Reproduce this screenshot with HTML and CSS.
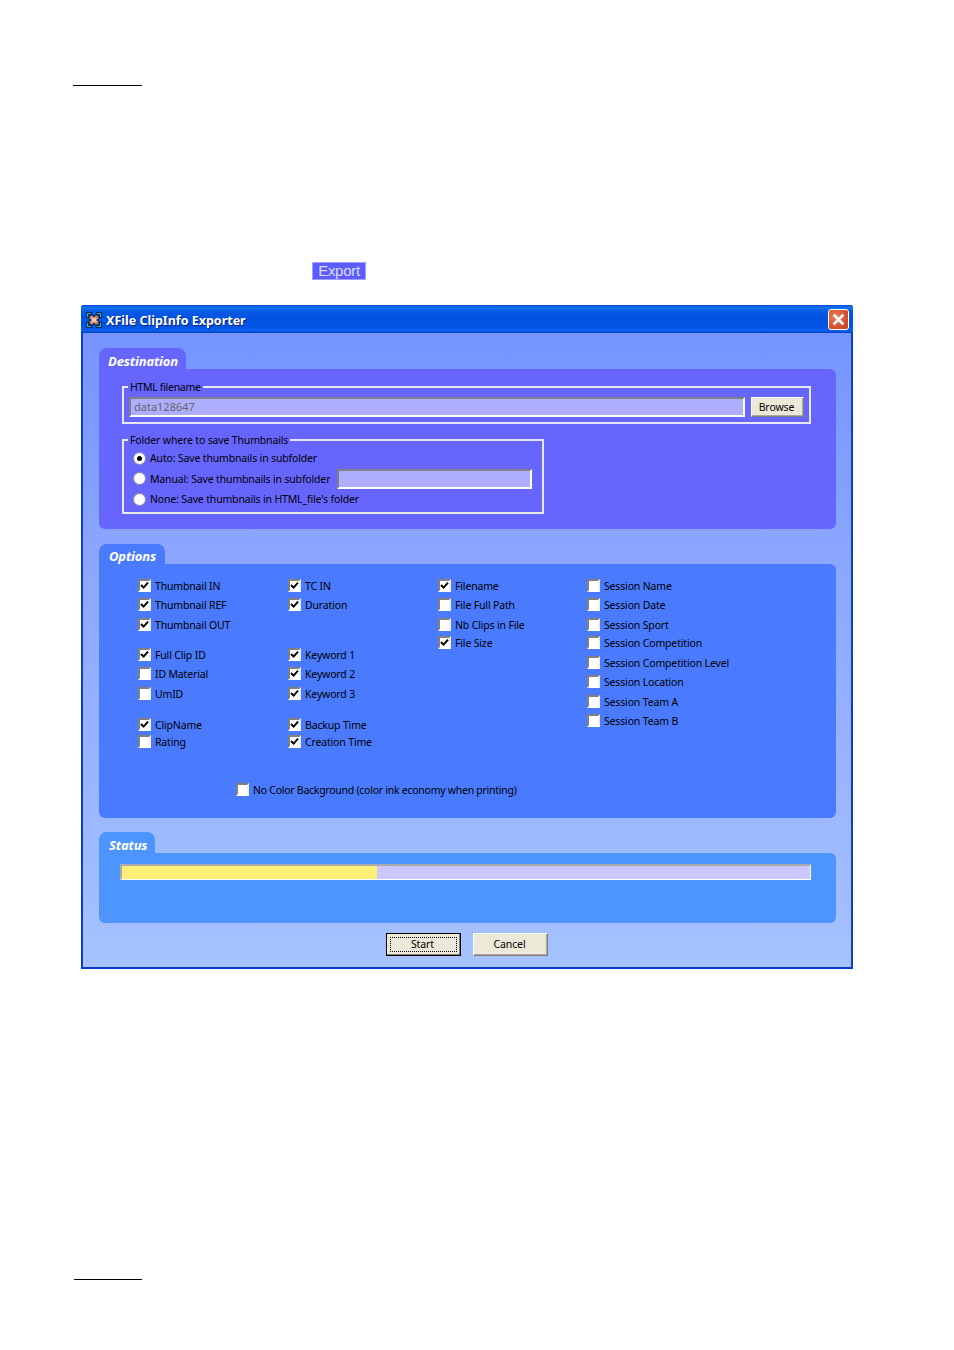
FILE: index.html
```html
<!DOCTYPE html>
<html lang="en">
<head>
<meta charset="utf-8">
<title>XFile ClipInfo Exporter</title>
<link rel="stylesheet" href="styles.css">
</head>
<body>
<div class="page">
  <div class="rule rule-top"></div>
  <div class="export-line"><span class="export">Export</span></div>
  <section class="window">
    <header class="titlebar">
      <svg class="app-icon" viewBox="0 0 16 16" aria-hidden="true">
        <path d="M0 0h6v3H3v3H0zM16 0v6h-3V3h-3V0zM0 16v-6h3v3h3v3zM16 16h-6v-3h3v-3h3z" fill="#0b2a4a"/>
        <path d="M1 1h4v1H2v3H1zM15 1v4h-1V2h-3V1zM1 15v-4h1v3h3v1zM15 15h-4v-1h3v-3h1z" fill="#2fb4c8"/>
        <path d="M4 4l8 8M12 4l-8 8" stroke="#0b2a4a" stroke-width="5.5" fill="none"/>
        <path d="M4.5 4.5l7 7M11.5 4.5l-7 7" stroke="#e98a5c" stroke-width="3.6" fill="none"/>
        <path d="M6 6l4 4M10 6l-4 4" stroke="#f6d8c6" stroke-width="1.6" fill="none"/>
      </svg>
      <span class="title">XFile ClipInfo Exporter</span>
      <span class="close">
        <svg viewBox="0 0 19 19" aria-hidden="true"><path d="M5.5 5.5l8 8M13.5 5.5l-8 8" stroke="#fff" stroke-width="2.6" stroke-linecap="square" fill="none"/></svg>
      </span>
    </header>
    <div class="client">
      <div class="tab tab-dest">Destination</div>
      <div class="panel panel-dest">
        <fieldset class="group group-html">
          <legend>HTML filename</legend>
          <div class="file-row">
            <div class="field field-file">data128647</div>
            <button class="btn btn-browse" type="button">Browse</button>
          </div>
        </fieldset>
        <fieldset class="group group-folder">
          <legend>Folder where to save Thumbnails</legend>
          <div class="radio-row r-20"><span class="radio on"></span><span>Auto: Save thumbnails in subfolder</span></div>
          <div class="radio-row r-21"><span class="radio"></span><span class="manual-label">Manual: Save thumbnails in subfolder</span><div class="field field-sub"></div></div>
          <div class="radio-row r-20"><span class="radio"></span><span>None: Save thumbnails in HTML_file's folder</span></div>
        </fieldset>
      </div>

      <div class="tab tab-opt">Options</div>
      <div class="panel panel-opt">
        <div class="cols">
          <div class="col">
            <div class="cb r19 on">Thumbnail IN</div>
            <div class="cb r20 on">Thumbnail REF</div>
            <div class="cb r30 on">Thumbnail OUT</div>
            <div class="cb r19 on">Full Clip ID</div>
            <div class="cb r20">ID Material</div>
            <div class="cb r31">UmID</div>
            <div class="cb r17 on">ClipName</div>
            <div class="cb r19">Rating</div>
          </div>
          <div class="col">
            <div class="cb r19 on">TC IN</div>
            <div class="cb r50 on">Duration</div>
            <div class="cb r19 on">Keyword 1</div>
            <div class="cb r20 on">Keyword 2</div>
            <div class="cb r31 on">Keyword 3</div>
            <div class="cb r17 on">Backup Time</div>
            <div class="cb r19 on">Creation Time</div>
          </div>
          <div class="col">
            <div class="cb r19 on">Filename</div>
            <div class="cb r20">File Full Path</div>
            <div class="cb r18">Nb Clips in File</div>
            <div class="cb r19 on">File Size</div>
          </div>
          <div class="col col-session">
            <div class="cb r19">Session Name</div>
            <div class="cb r20">Session Date</div>
            <div class="cb r18">Session Sport</div>
            <div class="cb r20">Session Competition</div>
            <div class="cb r19">Session Competition Level</div>
            <div class="cb r20">Session Location</div>
            <div class="cb r19">Session Team A</div>
            <div class="cb r19">Session Team B</div>
          </div>
        </div>
        <div class="cb no-color">No Color Background (color ink economy when printing)</div>
      </div>

      <div class="tab tab-status">Status</div>
      <div class="panel panel-status">
        <div class="progress"><div class="progress-fill"></div></div>
      </div>

      <div class="actions">
        <button class="btn btn-start" type="button"><span class="focus">Start</span></button>
        <button class="btn btn-cancel" type="button">Cancel</button>
      </div>
    </div>
  </section>
  <div class="rule rule-bottom"></div>
</div>
</body>
</html>
```
FILE: styles.css
```css
*, *::before, *::after { box-sizing: border-box; }
html, body { margin: 0; padding: 0; background: #fff; }
body { font-family: "Noto Sans", "Liberation Sans", sans-serif; font-size: 10.5px; color: #000; letter-spacing: -0.16px; }
.page { width: 954px; height: 1350px; padding-top: 85px; }
.rule { height: 1px; background: #000; }
.rule-top { width: 69px; margin-left: 73px; }
.rule-bottom { width: 68px; margin-left: 74px; margin-top: 310px; }
.export-line { height: 219px; padding: 176px 0 0 312px; }
.export {
  display: block; width: 54px; height: 18px;
  background: #5c5cff; color: #dcdcff; border: 1px solid #a0a0ff;
  font: 15px/15px "Liberation Sans", sans-serif; text-align: center; letter-spacing: -0.3px;
}
.window {
  width: 772px; height: 664px; margin-left: 81px;
  background: #0a3ed0;
  border: 2px solid #0a3ed0; border-top: 0;
  border-radius: 3px 3px 0 0;
  display: flex; flex-direction: column;
}
.titlebar {
  height: 28px; margin: 0 -2px; flex: none;
  display: flex; align-items: center; padding: 1px 3px 0 5px;
  border-radius: 3px 3px 0 0;
  background: linear-gradient(180deg, #0a50d8 0%, #1272f0 10%, #0a5ae6 22%, #0152e0 50%, #0156e6 80%, #0a62f2 90%, #0340c0 100%);
}
.app-icon { width: 16px; height: 16px; margin-right: 4px; flex: none; }
.title {
  flex: 1; color: #fff; font: bold 12.5px/16px "Noto Sans", sans-serif;
  text-shadow: 1px 1px 0 #0a1e80; letter-spacing: 0; padding-top: 3px;
}
.close {
  width: 21px; height: 21px; flex: none; margin-right: 1px;
  border: 1px solid #fff; border-radius: 3px;
  background: radial-gradient(circle at 35% 35%, #e8805e 0%, #d8502c 60%, #c03c1c 100%);
  display: flex;
}
.close svg { width: 19px; height: 19px; }
.client {
  flex: 1; min-height: 0;
  background: linear-gradient(180deg, #7594ff 0%, #8aa6ff 35%, #a6c2ff 100%);
  padding: 15px 14px 0 16px;
}
.tab {
  height: 21px; border-radius: 8px 8px 0 0;
  color: #fff; font: italic bold 13px/26px "Noto Sans", sans-serif;
  padding-left: 9px; letter-spacing: -0.15px;
}
.tab-dest { width: 87px; background: #6666ff; }
.tab-opt { width: 66px; height: 20px; background: #4a7bff; margin-top: 15px; line-height: 24px; padding-left: 10px; }
.tab-status { width: 56px; background: #4d94ff; margin-top: 14px; padding-left: 10px; }
.panel { width: 737px; border-radius: 0 6px 6px 6px; }
.panel-dest { height: 160px; background: #6666ff; padding: 12px 0 0 23px; }
.panel-opt { height: 254px; background: #4a7bff; position: relative; padding: 15px 0 0 39px; }
.panel-status { height: 70px; background: #4d94ff; padding: 11px 0 0 21px; }

.group { margin: 0; min-width: 0; border: 2px solid #e8e8f4; }
.group legend { padding: 0 2px; line-height: 12px; height: 12px; font-size: 10.5px; }
.group-html { width: 689px; height: 43px; padding: 4px 0 0 5px; }
.group-html legend { margin-left: -1px; letter-spacing: -0.3px; }
.group-folder { width: 422px; height: 80px; margin-top: 10px; padding: 2px 0 0 9px; }
.group-folder legend { margin-left: -5px; }
.file-row { display: flex; align-items: flex-start; gap: 6px; }
.field {
  background: #aeaeff;
  border: 2px solid; border-color: #808080 #fff #fff #808080;
  color: #666; line-height: 16px; padding-left: 3px;
}
.field-file { width: 616px; height: 20px; font-size: 11px; letter-spacing: 0; }
.field-sub { width: 195px; height: 20px; margin-left: 5px; }
.btn {
  font: 10.5px/1 "Noto Sans", sans-serif; color: #000; padding: 0 2px 0 0;
  background: #ece9d8; border: 1px solid; border-color: #fff #808080 #808080 #fff;
  box-shadow: inset -1px -1px 0 #aca899; letter-spacing: -0.1px;
}
.btn-browse { width: 53px; height: 20px; }
.radio-row { display: flex; align-items: center; gap: 4px; white-space: nowrap; }
.r-20 { height: 20px; }
.r-21 { height: 21px; }
.radio {
  width: 13px; height: 13px; border-radius: 50%; flex: none;
  background: radial-gradient(circle at center, #fff 55%, #dcdcdc 100%);
  border: 1px solid #9a9a9a; display: flex; align-items: center; justify-content: center;
}
.radio.on::after { content: ""; width: 5px; height: 5px; border-radius: 50%; background: #000; }
.manual-label { flex: none; width: 178px; }

.cols { display: grid; grid-template-columns: repeat(3, 150px) 1fr; }
.col-session { margin-left: -1px; }
.cb { display: flex; align-items: flex-start; gap: 4px; height: 19px; line-height: 14px; white-space: nowrap; }
.cb::before {
  content: ""; width: 13px; height: 13px; flex: none; background-color: #fff;
  border: 2px solid; border-color: #808080 #f0f0f0 #fff #808080;
  background-repeat: no-repeat; background-position: center;
}
.cb.on::before {
  background-image: url("data:image/svg+xml,%3Csvg xmlns='http://www.w3.org/2000/svg' viewBox='0 0 9 9' width='9' height='9'%3E%3Cpath d='M1 4l2.6 2.6L8 1.6' stroke='%23000' stroke-width='2' fill='none'/%3E%3C/svg%3E");
}
.r17 { height: 17px; }
.r18 { height: 18px; }
.r19 { height: 19px; }
.r20 { height: 20px; }
.r30 { height: 30px; }
.r31 { height: 31px; }
.r50 { height: 50px; }
.no-color { position: absolute; left: 137px; top: 219px; letter-spacing: -0.26px; }

.progress {
  width: 691px; height: 16px; background: #ccc8ff;
  border: 2px solid; border-color: #aaa #fff #fff #aaa; border-right-width: 1px; border-bottom-width: 1px;
}
.progress-fill { width: 255px; height: 100%; background: #ffee77; }

.actions { display: flex; gap: 12px; margin: 10px 0 0 287px; }
.actions .btn { width: 75px; height: 23px; }
.btn-start { border: 1px solid #000; box-shadow: inset -1px -1px 0 #808080; }
.actions .btn-start { padding: 3px; }
.focus { display: block; height: 100%; border: 1px dotted #000; line-height: 13px; padding-right: 2px; }
```
